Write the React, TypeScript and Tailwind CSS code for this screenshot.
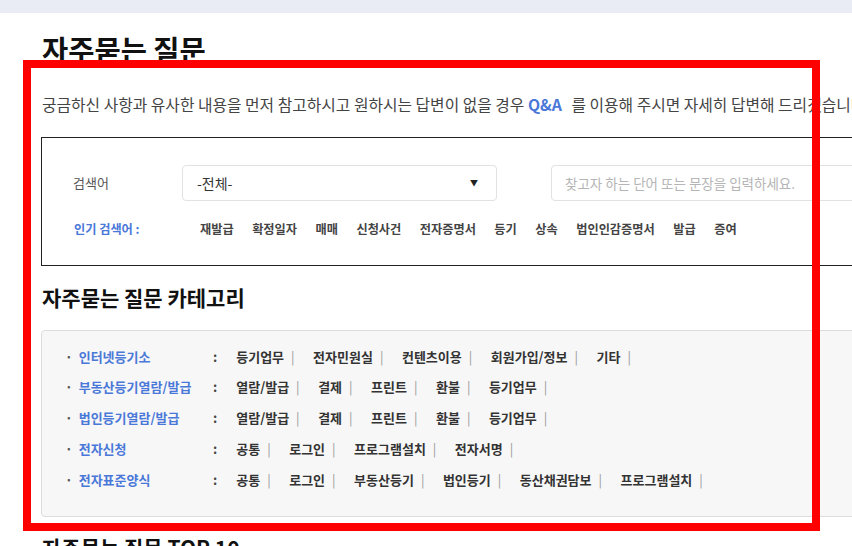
import React from 'react';

const popular = ['재발급', '확정일자', '매매', '신청사건', '전자증명서', '등기', '상속', '법인인감증명서', '발급', '증여'];

const categories = [
  { name: '인터넷등기소', items: ['등기업무', '전자민원실', '컨텐츠이용', '회원가입/정보', '기타'] },
  { name: '부동산등기열람/발급', items: ['열람/발급', '결제', '프린트', '환불', '등기업무'] },
  { name: '법인등기열람/발급', items: ['열람/발급', '결제', '프린트', '환불', '등기업무'] },
  { name: '전자신청', items: ['공통', '로그인', '프로그램설치', '전자서명'] },
  { name: '전자표준양식', items: ['공통', '로그인', '부동산등기', '법인등기', '동산채권담보', '프로그램설치'] },
];

export default function App() {
  return (
    <div
      className="relative w-[852px] h-[546px] overflow-hidden bg-white"
      style={{ fontFamily: '"Noto Sans CJK KR", "Noto Sans", sans-serif' }}
    >
      {/* top strip */}
      <div className="h-[13px] bg-[#e9ecf4]" />

      <div className="w-[1200px] pl-[42px]">
        {/* Header */}
        <h1 className="mt-[18px] text-[28.5px] leading-[36px] font-bold text-[#111]">자주묻는 질문</h1>
        <p className="mt-[27px] text-[15.8px] leading-[22px] text-[#444] whitespace-nowrap">
          궁금하신 사항과 유사한 내용을 먼저 참고하시고 원하시는 답변이 없을 경우{' '}
          <span className="font-bold text-[#4a78d8] mr-[6px]">Q&amp;A</span> 를 이용해 주시면 자세히 답변해 드리겠습니다.
        </p>

        {/* Search box */}
        <div className="mt-[21px] ml-[-1px] h-[129px] border border-[#222] pt-[27px] pl-[31px]">
          <div className="flex items-center">
            <span className="w-[109px] text-[13px] text-[#555]">검색어</span>
            <div className="w-[315px] h-[36px] rounded-[4px] border border-[#e2e2e2] flex items-center justify-between px-[14px] text-[14px] text-[#333]">
              <span>-전체-</span>
              <span className="text-[8px] text-[#222] mr-[4px]">▼</span>
            </div>
            <div className="ml-[54px] w-[315px] h-[36px] rounded-[4px] border border-[#e2e2e2] flex items-center px-[13px] text-[13.5px] text-[#b5b5b5]">
              찾고자 하는 단어 또는 문장을 입력하세요.
            </div>
          </div>
          <div className="mt-[19px] flex items-center text-[12.2px] font-semibold">
            <span className="w-[127px] text-[#4a78d8] pl-[1px]">인기 검색어 :</span>
            <div className="flex gap-[18.5px] text-[#444]">
              {popular.map((w) => (
                <span key={w}>{w}</span>
              ))}
            </div>
          </div>
        </div>

        {/* Categories */}
        <h2 className="mt-[17px] text-[21px] leading-[28px] font-bold text-[#111]">자주묻는 질문 카테고리</h2>
        <div className="mt-[19px] ml-[-1px] h-[187px] rounded-[4px] border border-[#dcdcdc] bg-[#f7f7f7] pt-[10px] pl-[23px]">
          {categories.map((c) => (
            <div key={c.name} className="flex items-center h-[30.75px] text-[13px] font-semibold">
              <div className="w-[148px] flex text-[#4a78d8]">
                <span className="text-[#555]">·</span>
                <span className="ml-[6px]">{c.name}</span>
              </div>
              <span className="text-[#444]">:</span>
              <div className="ml-[19px] flex text-[#333]">
                {c.items.map((it) => (
                  <span key={it} className="flex items-center mr-[18.5px]">
                    {it}
                    <span className="ml-[7px] font-normal text-[#999]">|</span>
                  </span>
                ))}
              </div>
            </div>
          ))}
        </div>

        <h2 className="mt-[16px] text-[21px] leading-[28px] font-bold text-[#111]">자주묻는 질문 TOP 10</h2>
      </div>

      {/* red highlight overlay */}
      <div className="absolute left-[23px] top-[60px] w-[797px] h-[471px] border-[8px] border-[#ff0000] pointer-events-none" />
    </div>
  );
}
